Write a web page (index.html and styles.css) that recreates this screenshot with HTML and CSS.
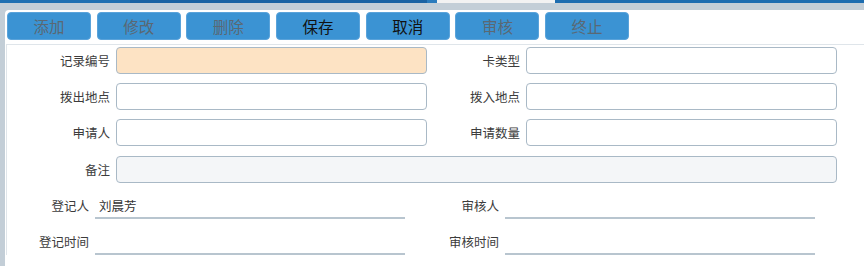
FILE: index.html
```html
<!DOCTYPE html>
<html lang="zh-CN">
<head>
  <meta charset="UTF-8">
  <title>卡调拨申请</title>
  <link rel="stylesheet" href="styles.css">
</head>
<body>
  <!-- Top tab strip -->
  <div class="tabs">
    <span class="tab tab-a"></span>
    <span class="tab tab-b"></span>
    <span class="tab tab-c"></span>
    <span class="tab tab-active"></span>
    <span class="tab tab-d"></span>
  </div>

  <div class="frame">
    <div class="panel">
      <!-- Toolbar -->
      <div class="toolbar">
        <button class="btn disabled">添加</button>
        <button class="btn disabled">修改</button>
        <button class="btn disabled">删除</button>
        <button class="btn">保存</button>
        <button class="btn">取消</button>
        <button class="btn disabled">审核</button>
        <button class="btn disabled">终止</button>
      </div>

      <!-- Edit form -->
      <div class="form">
        <div class="grid">
          <div class="cell">
            <label>记录编号</label>
            <input type="text" class="input key">
          </div>
          <div class="cell">
            <label>卡类型</label>
            <input type="text" class="input">
          </div>
          <div class="cell">
            <label>拨出地点</label>
            <input type="text" class="input">
          </div>
          <div class="cell">
            <label>拨入地点</label>
            <input type="text" class="input">
          </div>
          <div class="cell">
            <label>申请人</label>
            <input type="text" class="input">
          </div>
          <div class="cell">
            <label>申请数量</label>
            <input type="text" class="input">
          </div>
          <div class="cell wide">
            <label>备注</label>
            <input type="text" class="input readonly">
          </div>
        </div>

        <div class="grid info">
          <div class="cell">
            <label>登记人</label>
            <div class="field">刘晨芳</div>
          </div>
          <div class="cell">
            <label>审核人</label>
            <div class="field"></div>
          </div>
          <div class="cell">
            <label>登记时间</label>
            <div class="field"></div>
          </div>
          <div class="cell">
            <label>审核时间</label>
            <div class="field"></div>
          </div>
        </div>
      </div>
    </div>
  </div>
</body>
</html>
```

FILE: styles.css
```css
/* Basic reset */
body {
  margin: 0;
  font-family: "Noto Sans CJK SC", "Noto Sans", sans-serif;
  font-size: 12.5px;
  color: #3c3c3c;
  background: #c3ced7;
  overflow: hidden;
}
/* Top tab strip */
.tabs {
  display: flex;
  height: 3px;
  background: #1d6db0;
}
.tab {
  height: 3px;
}
.tab-a {
  width: 130px;
  background: #1f70b2;
}
.tab-b {
  width: 297px;
  background: #1a63a3;
}
.tab-c {
  width: 10px;
  background: #2b7cbd;
}
.tab-active {
  width: 118px;
  background: #f2f2f2;
}
.tab-d {
  flex: 1;
  background: #1d6db0;
}
/* Gray frame around the page */
.frame {
  padding: 7px 0 0 5px;
  height: calc(100vh - 3px);
  box-sizing: border-box;
}
.panel {
  background: #fff;
  height: 100%;
  border-top-left-radius: 4px;
}
/* Toolbar */
.toolbar {
  display: flex;
  gap: 5.7px;
  padding: 2px 0 4px 2px;
}
.btn {
  width: 84px;
  height: 28px;
  padding: 0;
  border: 1px solid #5aa3da;
  border-radius: 4px;
  background: #3b93d3;
  color: #111;
  font-family: inherit;
  font-size: 15.5px;
  line-height: 26px;
  cursor: pointer;
}
.btn.disabled {
  color: #5a6873;
  cursor: default;
}
/* Form */
.form {
  margin-left: 1px;
  border-top: 1px solid #dfe5ea;
  border-left: 1px solid #dfe5ea;
  padding-top: 2px;
}
.grid {
  display: grid;
  grid-template-columns: 410px 410px;
  row-gap: 9px;
  padding-left: 10px;
}
.cell {
  display: flex;
  align-items: center;
}
.cell.wide {
  grid-column: 1 / 3;
  margin-top: 1px;
}
.cell label {
  width: 93px;
  margin-right: 6px;
  text-align: right;
  flex-shrink: 0;
}
.input {
  width: 311px;
  height: 27px;
  box-sizing: border-box;
  border: 1px solid #a9b9c6;
  border-radius: 4px;
  background: #fff;
  padding: 0 6px;
  font-family: inherit;
  font-size: 13px;
  outline: none;
}
.cell.wide .input {
  flex: 1;
  width: auto;
}
.input.key {
  background: #fde3c4;
}
.input.readonly {
  background: #f4f6f8;
}
/* Registration info rows */
.info {
  padding-left: 0;
  margin-left: -2px;
  margin-top: 10px;
  row-gap: 10px;
}
.info .cell label {
  width: 84px;
  align-self: flex-start;
  padding-top: 3px;
  line-height: 20px;
}
.field {
  width: 310px;
  height: 26px;
  box-sizing: border-box;
  border-bottom: 2px solid #b8c5cf;
  padding: 3px 0 0 4px;
  line-height: 20px;
  color: #333;
}
```
